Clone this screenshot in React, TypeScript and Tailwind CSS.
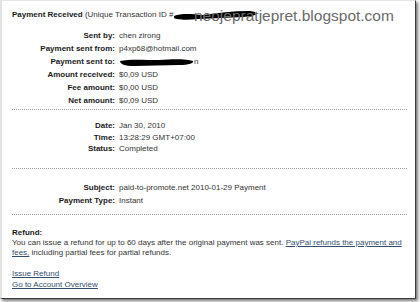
import React from "react";

const Blob = ({ w, h, d }: { w: number; h: number; d: string }) => (
  <svg width={w} height={h} viewBox={`0 0 ${w} ${h}`} className="inline-block align-middle">
    <path d={d} fill="#000" />
  </svg>
);

const Row = ({ label, children, lh }: { label: string; children: React.ReactNode; lh: string }) => (
  <div className={`flex ${lh} whitespace-nowrap`}>
    <div className="w-[103px] text-right font-bold text-[#1a1a1a]">{label}</div>
    <div className="ml-[4px] text-[#333]">{children}</div>
  </div>
);

const Dots = ({ mt }: { mt: string }) => (
  <div className={`${mt} w-[395px] border-t border-dotted border-[#9a9a9a]`} />
);

export default function App() {
  return (
    <div className="w-[420px] h-[302px] bg-white relative overflow-hidden" style={{ fontFamily: '"Liberation Sans", Arial, sans-serif' }}>
      <div className="relative w-[416px] h-[299px] bg-white border-l-2 border-t border-l-[#e2e2e2] border-t-[#e6e6e6] border-r border-b border-r-[#3a3a3a] border-b-[#3a3a3a] shadow-[2px_2px_3px_rgba(0,0,0,0.55)] pl-[10px] text-[8px] text-[#333]">
        <div className="pt-[8px] leading-[12px] h-[20px] whitespace-nowrap">
          <span className="font-bold text-[#1a1a1a]">Payment Received</span>
          <span> (Unique Transaction ID #</span>
          <Blob w={84} h={10} d="M1 6 C8 3 20 4 30 5 C45 3 60 1 75 1 C80 1 84 2 83 4 C82 6 76 6 70 7 C55 8 40 8 25 9 C15 10 4 10 1 8 Z" />
        </div>
        <div className="mt-[8px]">
          <Row label="Sent by:" lh="leading-[13px]">chen zirong</Row>
          <Row label="Payment sent from:" lh="leading-[13px]">p4xp68@hotmail.com</Row>
          <Row label="Payment sent to:" lh="leading-[13px]">
            <Blob w={75} h={8} d="M1 3 C10 1 25 2 40 2 C55 1 68 1 74 3 C75 5 70 7 60 7 C45 7 30 8 15 8 C6 8 1 6 1 3 Z" />
            <span>n</span>
          </Row>
          <Row label="Amount received:" lh="leading-[13px]">$0,09 USD</Row>
          <Row label="Fee amount:" lh="leading-[13px]">$0,00 USD</Row>
          <Row label="Net amount:" lh="leading-[13px]">$0,09 USD</Row>
        </div>
        <Dots mt="mt-[2px]" />
        <div className="mt-[10px]">
          <Row label="Date:" lh="leading-[11.5px]">Jan 30, 2010</Row>
          <Row label="Time:" lh="leading-[11.5px]">13:28:29 GMT+07:00</Row>
          <Row label="Status:" lh="leading-[11.5px]">Completed</Row>
        </div>
        <Dots mt="mt-[13.5px]" />
        <div className="mt-[11.5px]">
          <Row label="Subject:" lh="leading-[13px]">paid-to-promote.net 2010-01-29 Payment</Row>
          <Row label="Payment Type:" lh="leading-[13px]">Instant</Row>
        </div>
        <Dots mt="mt-[7.5px]" />
        <div className="mt-[13px] leading-[10px] whitespace-nowrap">
          <div className="font-bold text-[#1a1a1a]">Refund:</div>
          <div>
            You can issue a refund for up to 60 days after the original payment was sent.{" "}
            <span className="underline text-[#34506e]">PayPal refunds the payment and</span>
            <br />
            <span className="underline text-[#34506e]">fees,</span> including partial fees for partial refunds.
          </div>
        </div>
        <div className="mt-[9.5px] leading-[11px] text-[#34506e]">
          <div className="underline">Issue Refund</div>
          <div className="underline">Go to Account Overview</div>
        </div>
        <div className="absolute left-[192px] top-[7px] text-[15.5px] leading-none text-[#6a6a6a] whitespace-nowrap">
          neojepratjepret.blogspot.com
        </div>
      </div>
    </div>
  );
}
